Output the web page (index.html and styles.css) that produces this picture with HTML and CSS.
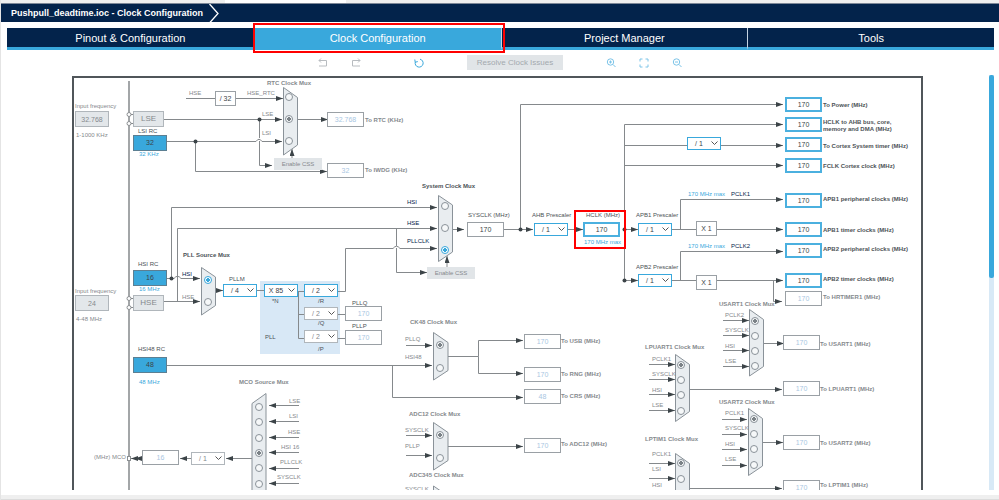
FILE: index.html
```html
<!DOCTYPE html>
<html lang="en">
<head>
    <meta charset="UTF-8">
    <meta name="viewport" content="width=device-width, initial-scale=1.0">
    <title>Pushpull_deadtime.ioc - Clock Configuration</title>
    <link rel="stylesheet" href="styles.css">
</head>
<body>
    <div class="editor-tabs"><div class="editor-tab"></div></div>

    <header class="title-bar">
        <h1>Pushpull_deadtime.ioc - Clock Configuration</h1>
        <svg class="crumb" viewBox="0 0 10 19" width="10" height="19"><path d="M0.5 0 L9 9.5 L0.5 19" fill="none" stroke="#fff" stroke-width="1.3"/></svg>
    </header>

    <nav class="tabs">
        <a class="tab" href="#pinout">Pinout &amp; Configuration</a>
        <a class="tab active" href="#clock">Clock Configuration</a>
        <a class="tab" href="#project">Project Manager</a>
        <a class="tab" href="#tools">Tools</a>
    </nav>

    <div class="toolbar">
        <div class="tool-group">
            <button class="tool muted" aria-label="Undo"><svg viewBox="0 0 12 12"><path d="M2 3.5 H9.5 V9 H2 M4 1.5 L2 3.5 L4 5.5"/></svg></button>
            <button class="tool muted" aria-label="Redo"><svg viewBox="0 0 12 12"><path d="M10 3.5 H2.5 V9 H10 M8 1.5 L10 3.5 L8 5.5"/></svg></button>
        </div>
        <button class="tool refresh" aria-label="Reset"><svg viewBox="0 0 12 12"><path d="M7 2.2 A4 4 0 1 1 2.3 5 M1.8 2.5 L2.2 5.2 L4.8 4.6"/></svg></button>
        <button class="resolve" disabled>Resolve Clock Issues</button>
        <div class="tool-group">
            <button class="tool light" aria-label="Zoom in"><svg viewBox="0 0 12 12"><circle cx="5.5" cy="5" r="3.2"/><path d="M8 7.5 L10.5 10 M4 5 H7 M5.5 3.5 V6.5"/></svg></button>
            <button class="tool light" aria-label="Fit"><svg viewBox="0 0 12 12"><path d="M2 4.5 V2 H4.5 M7.5 2 H10 V4.5 M10 7.5 V10 H7.5 M4.5 10 H2 V7.5"/></svg></button>
            <button class="tool light" aria-label="Zoom out"><svg viewBox="0 0 12 12"><circle cx="5.5" cy="5" r="3.2"/><path d="M8 7.5 L10.5 10 M4 5 H7"/></svg></button>
        </div>
    </div>

    <main class="viewport">
        <div class="board" id="board">
            <svg class="wires" viewBox="74 78 847 500" width="847" height="500">
                <defs>
                    <marker id="arrow" viewBox="0 0 7 5" refX="7" refY="2.5" markerWidth="7" markerHeight="5" markerUnits="userSpaceOnUse" orient="auto">
                        <path d="M0 0 L7 2.5 L0 5 Z" fill="#3c4448"/>
                    </marker>
                </defs>

                <rect x="260" y="281" width="80" height="73" fill="#d8e8f6"/>

                <!-- pins -->
                <path class="rail" d="M129 81 V578"/>
                <path class="wire" d="M131 114.5 H133 M131 123.5 H133 M131 298.5 H133 M131 307.5 H133"/>
                <g class="pin">
                    <circle cx="129" cy="114.5" r="2"/><circle cx="129" cy="123.5" r="2"/>
                    <circle cx="129" cy="298.5" r="2"/><circle cx="129" cy="307.5" r="2"/>
                    <rect x="127.5" y="456.5" width="3" height="4"/>
                </g>

                <!-- wires without arrow -->
                <g class="wire">
                    <path d="M186 98.5 H215 M177.5 301.5 V275 M256 290.5 H264 M297 291.5 H304 M298.5 291.5 V338.5 H304 M298.5 314.5 H304 M337 314.5 H345 M337 338.5 H345"/>
                    <path d="M624.5 124.5 V280.5 M671 229.5 H696 M671 280.5 H696 M624.5 145.5 H687 M448 356.5 H478.5"/>
                </g>

                <!-- wires with arrow -->
                <g class="wire arrow">
                    <path d="M235 98.5 H283"/>
                    <path d="M163 119.5 H282"/>
                    <path d="M166 141.5 H256 Q259 137 262 141.5 H282"/>
                    <path d="M195.5 141.5 V171.5 H327"/>
                    <path d="M259.5 119.5 V138 M259.5 141 V165.5 H272"/>
                    <path d="M297 119.5 H328"/>
                    <path d="M292 159 V149"/>
                    <path d="M166 278.5 H174 Q177.5 274 181 278.5 H200"/>
                    <path d="M171.5 278.5 V207.5 H437"/>
                    <path d="M163 301.5 H200"/>
                    <path d="M177.5 275 V228.5 H437"/>
                    <path d="M215 290.5 H223"/>
                    <path d="M337 291.5 H345.5 V248.5 H393 Q396.5 244 400 248.5 H437"/>
                    <path d="M396.5 228.5 V246 M396.5 248 V272.5 H427"/>
                    <path d="M452 229.5 H464"/>
                    <path d="M504 229.5 H533"/>
                    <path d="M447 267 V256"/>
                    <path d="M520.5 229.5 V104.5 H783"/>
                    <path d="M567 229.5 H583"/>
                    <path d="M624.5 229.5 H638"/>
                    <path d="M624.5 280.5 H638"/>
                    <path d="M624.5 124.5 H783"/>
                    <path d="M720 145.5 H783"/>
                    <path d="M624.5 165.5 H783"/>
                    <path d="M680.5 229.5 V199.5 H783"/>
                    <path d="M716 229.5 H783"/>
                    <path d="M680.5 280.5 V251.5 H783"/>
                    <path d="M716 280.5 H783"/>
                    <path d="M773.5 280.5 V301.5 H782"/>
                    <path d="M166 365.5 H432"/>
                    <path d="M392.5 365.5 V397.5 H523"/>
                    <path d="M406 345.5 H432"/>
                    <path d="M478.5 356.5 V340.5 H523"/>
                    <path d="M478.5 356.5 V373.5 H523"/>
                    <path d="M406 435.5 H432"/>
                    <path d="M406 455.5 H432"/>
                    <path d="M448 446.5 H523"/>
                    <path d="M299 405.5 H269"/><path d="M299 421.5 H269"/><path d="M299 437.5 H269"/>
                    <path d="M299 452.5 H269"/><path d="M299 468.5 H269"/><path d="M299 483.5 H269"/>
                    <path d="M252 458.5 H226"/><path d="M191 458.5 H180"/><path d="M142 458.5 H135"/><path d="M138 458.5 H131"/>
                    <path d="M723 320.5 H749"/><path d="M723 335.5 H749"/><path d="M723 350.5 H749"/><path d="M723 366.5 H749"/>
                    <path d="M763 343.5 H784"/>
                    <path d="M649 364.5 H675"/><path d="M649 379.5 H675"/><path d="M649 394.5 H675"/><path d="M649 410.5 H675"/>
                    <path d="M689 389.5 H782"/>
                    <path d="M722 419.5 H747"/><path d="M722 434.5 H747"/><path d="M722 449.5 H747"/><path d="M722 465.5 H747"/>
                    <path d="M762 442.5 H783"/>
                    <path d="M649 463.5 H675"/><path d="M649 478.5 H675"/>
                    <path d="M689 488.5 H782"/>
                </g>

                <!-- junctions -->
                <g fill="#3c4448">
                    <circle cx="195.5" cy="141.5" r="2"/><circle cx="259.5" cy="119.5" r="2"/>
                    <circle cx="171.5" cy="278.5" r="2"/><circle cx="520.5" cy="229.5" r="2"/>
                    <circle cx="624.5" cy="229.5" r="2"/><circle cx="624.5" cy="280.5" r="2"/>
                </g>

                <!-- mux bodies -->
                <g class="mux">
                    <path d="M283.5 87.5 L297.5 97.5 V145 L283.5 155 Z"/>
                    <path d="M201.5 267.5 L215.5 277 V305.5 L201.5 315 Z"/>
                    <path d="M438.5 195.5 L452.5 205 V252 L438.5 261.5 Z"/>
                    <path d="M433.5 332.5 L448 342.5 V370.5 L433.5 380 Z"/>
                    <path d="M433.5 422.5 L448 432.5 V460.5 L433.5 470 Z"/>
                    <path d="M433.5 486 L448 496 V524 L433.5 534 Z"/>
                    <path d="M266 393.5 V520 H252 V403.5 Z"/>
                    <path d="M749.5 309.5 L763.5 319.5 V366.5 L749.5 376 Z"/>
                    <path d="M675.5 354.5 L689.5 364.5 V411.5 L675.5 421.5 Z"/>
                    <path d="M748.5 408.5 L762.5 418.5 V466 L748.5 475.5 Z"/>
                    <path d="M675.5 453.5 L689.5 463.5 V510 L675.5 520 Z"/>
                </g>
            </svg>
            <div class="highlight"></div>
        </div>
        <div class="scrollbar"><div class="thumb"></div></div>
    </main>

    <footer class="status"></footer>

    <script src="clock.js"></script>
</body>
</html>
```
FILE: styles.css
```css
* {
    margin: 0;
    padding: 0;
    box-sizing: border-box;
}

body {
    font-family: "Liberation Sans", Arial, sans-serif;
    background: #fff;
    height: 100vh;
    display: flex;
    flex-direction: column;
    border-left: 1px solid #e4e4e4;
    overflow: hidden;
}

button,
input,
select,
output {
    font-family: inherit;
}

.editor-tabs {
    height: 3px;
    background: #efefef;
}

.editor-tab {
    width: 121px;
    height: 3px;
    margin-left: 224px;
    background: #fff;
}

/* Header */
.title-bar {
    height: 19px;
    display: flex;
    align-items: center;
    gap: 6px;
    padding-left: 10px;
    background: #03234b;
    border-top: 1px solid #7d8797;
}

.title-bar h1 {
    font-size: 9px;
    line-height: 12px;
    color: #fff;
}

.tabs {
    display: grid;
    grid-template-columns: repeat(4, 1fr);
    margin: 6px 5px 0 6px;
}

.tab {
    position: relative;
    height: 22px;
    font-size: 11px;
    line-height: 20px;
    text-align: center;
    text-decoration: none;
    color: #fff;
    background: #03234b;
    border-bottom: 3px solid #39a8dc;
}

.tab + .tab {
    border-left: 1px solid #c4d3e2;
}

.tab.active {
    background: #39a8dc;
    border-left-color: #39a8dc;
}

.tab.active::after {
    content: '';
    position: absolute;
    inset: -5px -4px -6px -2px;
    border: 2px solid #f00;
    z-index: 1;
}

/* Toolbar */
.toolbar {
    height: 25px;
    display: flex;
    align-items: center;
    justify-content: center;
    gap: 42px;
}

.tool-group {
    display: flex;
    gap: 21px;
}

.tool {
    width: 12px;
    height: 12px;
    border: none;
    background: none;
    color: #39a8dc;
}

.tool.muted {
    color: #b8bcc0;
}

.tool.light {
    color: #7cc4e8;
}

.tool.refresh {
    margin-left: 9px;
}

.tool svg {
    display: block;
    fill: none;
    stroke: currentColor;
    stroke-width: 1;
}

.resolve {
    padding: 0 10px;
    height: 15px;
    border: none;
    background: #e1e5e8;
    color: #a3a9ae;
    font-size: 8px;
}

/* Diagram */
.viewport {
    flex: 1;
    min-height: 0;
    display: flex;
    justify-content: space-between;
    padding: 0 5px 0 71px;
    overflow: hidden;
}

.board {
    position: relative;
    flex: none;
    align-self: flex-start;
    margin-top: 1px;
    border: 2px solid #50565a;
}

.wires {
    display: block;
}

.wire {
    fill: none;
    stroke: #85898c;
    stroke-width: 1;
}

.arrow path {
    marker-end: url(#arrow);
}

.rail {
    stroke: #a3a6a8;
    stroke-width: 2;
}

.pin {
    fill: #fff;
    stroke: #8b8f92;
}

.mux {
    fill: #e9edf0;
    stroke: #8a9299;
}

.highlight {
    position: absolute;
    left: 500px;
    top: 132px;
    width: 52px;
    height: 39px;
    border: 2px solid #f00;
}

.text {
    position: absolute;
    font-size: 6px;
    line-height: 8px;
    white-space: nowrap;
    color: #4c5256;
}

.text.bold {
    font-weight: bold;
}

.text.off {
    color: #85898d;
}

.text.signal {
    color: #03234b;
}

.text.limit {
    color: #39a8dc;
}

.box,
.source,
.divider,
.css {
    position: absolute;
    display: block;
    width: 37px;
    height: 15px;
    border: 1px solid #9aa0a5;
    border-radius: 0;
    background: #fff;
    color: #3c4448;
    font-size: 7px;
    line-height: 13px;
    text-align: center;
}

.box.on {
    border: 2px solid #4bb0df;
    line-height: 11px;
}

.box.off {
    color: #a9c6e2;
}

.box.small {
    width: 21px;
}

.source {
    width: 34px;
    height: 16px;
    background: #39a8dc;
    border-color: #5c7f92;
    line-height: 14px;
}

.source.off {
    background: #e3e7ea;
    border-color: #b0b6bb;
    color: #85898d;
}

.source.crystal {
    width: 31px;
    font-size: 8px;
}

.divider {
    width: 34px;
    height: 13px;
    padding-right: 10px;
    border: 1px solid #39a8dc;
    line-height: 11px;
    text-align: center;
    text-align-last: center;
    appearance: none;
    background: #fff url("data:image/svg+xml,%3Csvg xmlns='http://www.w3.org/2000/svg' width='7' height='5'%3E%3Cpath d='M.5 .5 L3.5 3.5 L6.5 .5' fill='none' stroke='%23555'/%3E%3C/svg%3E") no-repeat right 2px center;
}

.divider.off {
    border-color: #b0b6bb;
    color: #85898d;
    opacity: 1;
}

.css {
    width: 48px;
    height: 12px;
    border: none;
    background: #e1e5e8;
    color: #85898d;
    font-size: 6px;
    line-height: 12px;
}

.radio {
    position: absolute;
    width: 8px;
    height: 8px;
    appearance: none;
    border: 1px solid #8a9299;
    border-radius: 50%;
    background: #f6f8f9;
}

.radio:checked {
    background: radial-gradient(circle, #7b8287 0 2px, #f6f8f9 2px);
}

.radio.on:checked {
    border-color: #39a8dc;
    background: radial-gradient(circle, #39a8dc 0 2px, #fff 2px);
}

/* Scrollbar and status */
.scrollbar {
    width: 5px;
    background: #d8e9f6;
}

.thumb {
    height: 49%;
    border-radius: 2px;
    background: #39a8dc;
}

.status {
    height: 10px;
    border-top: 5px solid #fff;
    border-bottom: 1px solid #dcdcdc;
    background: #efefef;
}
```
FILE: clock.js
```js
// Top left corner of the drawing, same as the viewBox of the wires
const ORIGIN = { x: 74, y: 78 };
const board = document.getElementById('board');
let nextId = 0;

function place(tag, className, x, y, text) {
    const el = document.createElement(tag);
    el.className = className;
    el.style.left = (x - ORIGIN.x) + 'px';
    el.style.top = (y - ORIGIN.y) + 'px';
    if (text) el.textContent = text;
    board.appendChild(el);
    return el;
}

// Caption, y is the middle of the line
function caption(text, x, y, className, forId) {
    const el = place(forId ? 'label' : 'span', 'text ' + (className || ''), x, y - 4, text);
    if (forId) el.htmlFor = forId;
    return el;
}

// [kind, class, value, x, y, label, label x, label y, label class]
const fields = [
    ['input', 'source off', '32.768', 75, 111, 'Input frequency', 75, 106, 'off'],
    ['input', 'source off', '24', 75, 295, 'Input frequency', 75, 291, 'off'],
    ['output', 'source', '32', 133, 135, 'LSI RC', 138, 131, ''],
    ['output', 'source', '16', 133, 270, 'HSI RC', 138, 264, ''],
    ['output', 'source', '48', 133, 357, 'HSI48 RC', 138, 349, ''],
    ['output', 'box off', '32.768', 327, 112, 'To RTC (KHz)', 365, 120, 'bold off'],
    ['output', 'box off', '32', 327, 163, 'To IWDG (KHz)', 365, 170, 'bold off'],
    ['select', 'divider', '/ 4', 223, 284, 'PLLM', 229, 279, ''],
    ['select', 'divider', 'X 85', 264, 284, '*N', 272, 301, ''],
    ['select', 'divider', '/ 2', 304, 284, '/R', 318, 301, ''],
    ['select', 'divider off', '/ 2', 304, 307, '/Q', 318, 323, ''],
    ['select', 'divider off', '/ 2', 304, 330, '/P', 318, 349, ''],
    ['output', 'box off', '170', 345, 306, 'PLLQ', 352, 303, ''],
    ['output', 'box off', '170', 345, 330, 'PLLP', 352, 326, ''],
    ['output', 'box', '170', 467, 222, 'SYSCLK (MHz)', 468, 215, ''],
    ['select', 'divider', '/ 1', 534, 223, 'AHB Prescaler', 532, 215, ''],
    ['input', 'box on', '170', 583, 222, 'HCLK (MHz)', 586, 215, ''],
    ['select', 'divider', '/ 1', 638, 223, 'APB1 Prescaler', 636, 215, ''],
    ['select', 'divider', '/ 1', 638, 274, 'APB2 Prescaler', 636, 267, ''],
    ['output', 'box on', '170', 785, 97, 'To Power (MHz)', 823, 105, 'bold'],
    ['output', 'box on', '170', 785, 117, 'HCLK to AHB bus, core,', 823, 122, 'bold'],
    ['output', 'box on', '170', 785, 137, 'To Cortex System timer (MHz)', 823, 146, 'bold'],
    ['output', 'box on', '170', 785, 158, 'FCLK Cortex clock (MHz)', 823, 166, 'bold'],
    ['output', 'box on', '170', 785, 193, 'APB1 peripheral clocks (MHz)', 823, 199, 'bold'],
    ['output', 'box on', '170', 785, 222, 'APB1 timer clocks (MHz)', 823, 230, 'bold'],
    ['output', 'box on', '170', 785, 243, 'APB2 peripheral clocks (MHz)', 823, 249, 'bold'],
    ['output', 'box on', '170', 785, 273, 'APB2 timer clocks (MHz)', 823, 279, 'bold'],
    ['output', 'box off', '170', 785, 291, 'To HRTIMER1 (MHz)', 823, 297, 'bold off'],
    ['output', 'box off', '170', 783, 335, 'To USART1 (MHz)', 820, 344, 'bold off'],
    ['output', 'box off', '170', 783, 381, 'To LPUART1 (MHz)', 820, 389, 'bold off'],
    ['output', 'box off', '170', 783, 435, 'To USART2 (MHz)', 820, 443, 'bold off'],
    ['output', 'box off', '170', 783, 480, 'To LPTIM1 (MHz)', 820, 485, 'bold off'],
    ['output', 'box off', '170', 524, 334, 'To USB (MHz)', 561, 341, 'bold off'],
    ['output', 'box off', '170', 524, 367, 'To RNG (MHz)', 561, 374, 'bold off'],
    ['output', 'box off', '48', 524, 389, 'To CRS (MHz)', 561, 396, 'bold off'],
    ['output', 'box off', '170', 524, 438, 'To ADC12 (MHz)', 561, 444, 'bold off'],
    ['output', 'box off', '16', 142, 450, '(MHz) MCO', 94, 457, 'off']
];

fields.forEach(([kind, className, value, x, y, label, lx, ly, labelClass]) => {
    const el = place(kind, className, x, y);
    el.id = 'field' + nextId++;
    if (kind === 'select') {
        el.add(new Option(value));
        el.disabled = className.includes('off');
    } else {
        el.value = value;
    }
    caption(label, lx, ly, labelClass, el.id);
});

// Dividers without a caption of their own
[['divider', 687, 137, 'Cortex prescaler'], ['divider off', 191, 452, 'MCO prescaler']].forEach(([className, x, y, name]) => {
    const el = place('select', className, x, y);
    el.add(new Option('/ 1'));
    el.disabled = className.includes('off');
    el.setAttribute('aria-label', name);
});

place('span', 'source off crystal', 133, 111, 'LSE');
place('span', 'source off crystal', 133, 295, 'HSE');
place('span', 'box small', 215, 91, '/ 32');
place('span', 'box small', 696, 221, 'X 1');
place('span', 'box small', 696, 275, 'X 1');
place('button', 'css', 274, 158, 'Enable CSS').disabled = true;
place('button', 'css', 427, 267, 'Enable CSS').disabled = true;

// Free text
[
    ['1-1000 KHz', 76, 135, 'off'],
    ['4-48 MHz', 76, 319, 'off'],
    ['32 KHz', 139, 154, 'limit'],
    ['16 MHz', 139, 289, 'limit'],
    ['48 MHz', 139, 382, 'limit'],
    ['170 MHz max', 584, 242, 'limit'],
    ['170 MHz max', 688, 194, 'limit'],
    ['170 MHz max', 688, 246, 'limit'],
    ['PCLK1', 731, 194, 'signal'],
    ['PCLK2', 731, 246, 'signal'],
    ['memory and DMA (MHz)', 823, 129, 'bold'],
    ['HSE', 189, 93, 'off'],
    ['PLL', 265, 337, ''],
    ['ADC345 Clock Mux', 409, 475, 'bold off'],
    ['SYSCLK', 405, 489, 'off'],
    ['HSI', 652, 485, 'off']
].forEach(item => caption(...item));

// inputs: [signal, label x, label y, radio y], x is the centre of the radios
const muxes = [
    { title: 'RTC Clock Mux', tx: 267, ty: 83, x: 289, off: true, checked: 1,
      inputs: [['HSE_RTC', 247, 93, 97], ['LSE', 262, 114, 119], ['LSI', 262, 133, 141]] },
    { title: 'PLL Source Mux', tx: 183, ty: 255, x: 208, checked: 0,
      inputs: [['HSI', 182, 274, 280], ['HSE', 182, 297, 302, 'off']] },
    { title: 'System Clock Mux', tx: 422, ty: 186, x: 445, checked: 2,
      inputs: [['HSI', 407, 202, 206], ['HSE', 407, 223, 228], ['PLLCLK', 407, 241, 250]] },
    { title: 'CK48 Clock Mux', tx: 410, ty: 322, x: 440, off: true, checked: 0,
      inputs: [['PLLQ', 405, 339, 345], ['HSI48', 405, 357, 368]] },
    { title: 'ADC12 Clock Mux', tx: 409, ty: 414, x: 440, off: true, checked: 0,
      inputs: [['SYSCLK', 405, 430, 435], ['PLLP', 405, 446, 458]] },
    { title: 'MCO Source Mux', tx: 239, ty: 382, x: 259, off: true, checked: 3,
      inputs: [['LSE', 289, 401, 407], ['LSI', 289, 416, 422], ['HSE', 288, 432, 438],
               ['HSI 16', 281, 447, 453], ['PLLCLK', 280, 462, 468], ['SYSCLK', 277, 477, 484]] },
    { title: 'USART1 Clock Mux', tx: 719, ty: 304, x: 755, off: true, checked: 0,
      inputs: [['PCLK2', 725, 315, 321], ['SYSCLK', 725, 330, 336], ['HSI', 725, 346, 351], ['LSE', 725, 361, 366]] },
    { title: 'LPUART1 Clock Mux', tx: 645, ty: 347, x: 681, off: true, checked: 0,
      inputs: [['PCLK1', 652, 359, 365], ['SYSCLK', 652, 374, 380], ['HSI', 652, 390, 395], ['LSE', 652, 405, 411]] },
    { title: 'USART2 Clock Mux', tx: 719, ty: 402, x: 754, off: true, checked: 0,
      inputs: [['PCLK1', 725, 413, 419], ['SYSCLK', 725, 428, 434], ['HSI', 725, 444, 449], ['LSE', 725, 459, 465]] },
    { title: 'LPTIM1 Clock Mux', tx: 645, ty: 439, x: 681, off: true, checked: 0,
      inputs: [['PCLK1', 652, 454, 463], ['LSI', 652, 469, 479]] }
];

muxes.forEach(mux => {
    caption(mux.title, mux.tx, mux.ty, mux.off ? 'bold off' : 'bold');
    mux.inputs.forEach(([signal, lx, ly, ry, state], i) => {
        const radio = place('input', mux.off ? 'radio' : 'radio on', mux.x - 4, ry - 4);
        radio.type = 'radio';
        radio.name = mux.title;
        radio.id = 'radio' + nextId++;
        radio.checked = i === mux.checked;
        caption(signal, lx, ly, mux.off || state ? 'off' : 'signal', radio.id);
    });
});
```
